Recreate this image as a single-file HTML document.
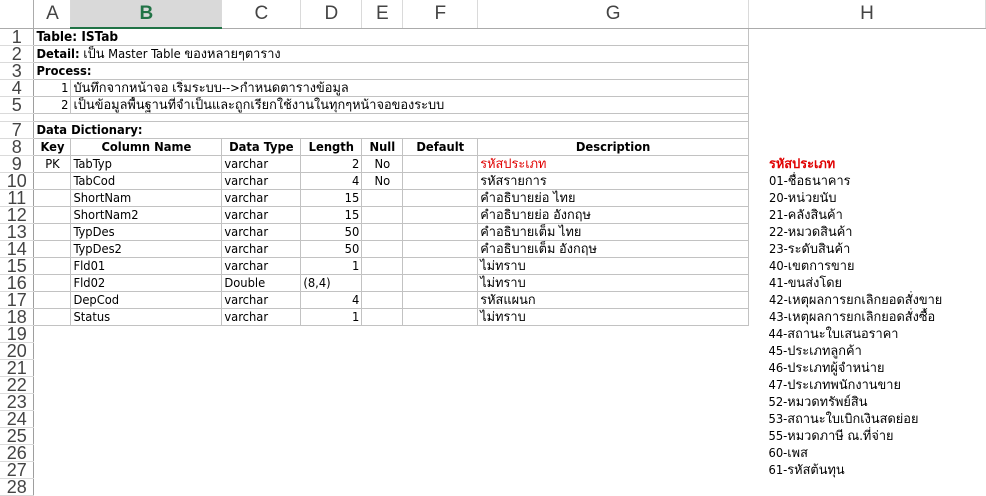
<!DOCTYPE html>
<html><head><meta charset="utf-8"><style>
*{margin:0;padding:0;box-sizing:border-box}
body{width:986px;height:484px;overflow:hidden;background:#fff;font-family:"DejaVu Sans Condensed","Liberation Sans","Noto Sans CJK SC",sans-serif;font-size:12.8px;color:#000}
table{border-collapse:collapse;table-layout:fixed;position:absolute;left:0;top:0}
td{height:17px;padding:0 2px;white-space:nowrap;overflow:hidden;line-height:15px;vertical-align:bottom}
.rh{background:#fff;border-right:1px solid #9e9e9e;border-bottom:1px solid #dadada;color:#444;text-align:center;font-family:"Liberation Sans",sans-serif;font-size:18px;line-height:16px;padding:0}
.ch{height:28px;border-bottom:1px solid #ababab;border-right:1px solid #dadada;color:#444;text-align:center;font-family:"Liberation Sans",sans-serif;font-size:19px;vertical-align:middle;background:#fff}
.chs{background:#d9d9d9;color:#217346;border-bottom:2px solid #217346;font-weight:bold}
.g{border:1px solid #c2c2c2}
.b{font-weight:bold}
.c{text-align:center}.r{text-align:right}
.red{color:#e00000}
.h{padding-left:20px}
</style></head><body>
<table>
<colgroup><col style="width:34px"><col style="width:37px"><col style="width:151px"><col style="width:79px"><col style="width:61px"><col style="width:41px"><col style="width:75px"><col style="width:271px"><col style="width:237px"></colgroup>
<tr><td class="ch" style="background:#fff;border-right:1px solid #ababab"></td><td class="ch">A</td><td class="ch chs">B</td><td class="ch">C</td><td class="ch">D</td><td class="ch">E</td><td class="ch">F</td><td class="ch">G</td><td class="ch" style="border-left:1px solid #dadada">H</td></tr>
<tr><td class="rh">1</td><td class="g b" colspan="7" style="font-size:13.5px">Table: ISTab</td><td></td></tr>
<tr><td class="rh">2</td><td class="g" colspan="7"><b>Detail:</b> เป็น Master Table ของหลายๆตาราง</td><td></td></tr>
<tr><td class="rh">3</td><td class="g b" colspan="7">Process:</td><td></td></tr>
<tr><td class="rh">4</td><td class="g r">1</td><td class="g" colspan="6">บันทึกจากหน้าจอ เริ่มระบบ-->กำหนดตารางข้อมูล</td><td></td></tr>
<tr><td class="rh">5</td><td class="g r">2</td><td class="g" colspan="6">เป็นข้อมูลพื้นฐานที่จำเป็นและถูกเรียกใช้งานในทุกๆหน้าจอของระบบ</td><td></td></tr>
<tr><td class="rh" style="height:8px;font-size:8px;line-height:6px"></td><td class="g" colspan="7" style="height:8px"></td><td style="height:8px"></td></tr>
<tr><td class="rh">7</td><td class="g b" colspan="7">Data Dictionary:</td><td></td></tr>
<tr><td class="rh">8</td><td class="g b c">Key</td><td class="g b c">Column Name</td><td class="g b c">Data Type</td><td class="g b c">Length</td><td class="g b c">Null</td><td class="g b c">Default</td><td class="g b c">Description</td><td></td></tr>
<tr><td class="rh">9</td><td class="g c">PK</td><td class="g">TabTyp</td><td class="g">varchar</td><td class="g r">2</td><td class="g c">No</td><td class="g"></td><td class="g red">รหัสประเภท</td><td class="h red b">รหัสประเภท</td></tr>
<tr><td class="rh">10</td><td class="g"></td><td class="g">TabCod</td><td class="g">varchar</td><td class="g r">4</td><td class="g c">No</td><td class="g"></td><td class="g">รหัสรายการ</td><td class="h">01-ชื่อธนาคาร</td></tr>
<tr><td class="rh">11</td><td class="g"></td><td class="g">ShortNam</td><td class="g">varchar</td><td class="g r">15</td><td class="g"></td><td class="g"></td><td class="g">คำอธิบายย่อ ไทย</td><td class="h">20-หน่วยนับ</td></tr>
<tr><td class="rh">12</td><td class="g"></td><td class="g">ShortNam2</td><td class="g">varchar</td><td class="g r">15</td><td class="g"></td><td class="g"></td><td class="g">คำอธิบายย่อ อังกฤษ</td><td class="h">21-คลังสินค้า</td></tr>
<tr><td class="rh">13</td><td class="g"></td><td class="g">TypDes</td><td class="g">varchar</td><td class="g r">50</td><td class="g"></td><td class="g"></td><td class="g">คำอธิบายเต็ม ไทย</td><td class="h">22-หมวดสินค้า</td></tr>
<tr><td class="rh">14</td><td class="g"></td><td class="g">TypDes2</td><td class="g">varchar</td><td class="g r">50</td><td class="g"></td><td class="g"></td><td class="g">คำอธิบายเต็ม อังกฤษ</td><td class="h">23-ระดับสินค้า</td></tr>
<tr><td class="rh">15</td><td class="g"></td><td class="g">Fld01</td><td class="g">varchar</td><td class="g r">1</td><td class="g"></td><td class="g"></td><td class="g">ไม่ทราบ</td><td class="h">40-เขตการขาย</td></tr>
<tr><td class="rh">16</td><td class="g"></td><td class="g">Fld02</td><td class="g">Double</td><td class="g">(8,4)</td><td class="g"></td><td class="g"></td><td class="g">ไม่ทราบ</td><td class="h">41-ขนส่งโดย</td></tr>
<tr><td class="rh">17</td><td class="g"></td><td class="g">DepCod</td><td class="g">varchar</td><td class="g r">4</td><td class="g"></td><td class="g"></td><td class="g">รหัสแผนก</td><td class="h">42-เหตุผลการยกเลิกยอดสั่งขาย</td></tr>
<tr><td class="rh">18</td><td class="g"></td><td class="g">Status</td><td class="g">varchar</td><td class="g r">1</td><td class="g"></td><td class="g"></td><td class="g">ไม่ทราบ</td><td class="h">43-เหตุผลการยกเลิกยอดสั่งซื้อ</td></tr>
<tr><td class="rh">19</td><td colspan="7"></td><td class="h">44-สถานะใบเสนอราคา</td></tr>
<tr><td class="rh">20</td><td colspan="7"></td><td class="h">45-ประเภทลูกค้า</td></tr>
<tr><td class="rh">21</td><td colspan="7"></td><td class="h">46-ประเภทผู้จำหน่าย</td></tr>
<tr><td class="rh">22</td><td colspan="7"></td><td class="h">47-ประเภทพนักงานขาย</td></tr>
<tr><td class="rh">23</td><td colspan="7"></td><td class="h">52-หมวดทรัพย์สิน</td></tr>
<tr><td class="rh">24</td><td colspan="7"></td><td class="h">53-สถานะใบเบิกเงินสดย่อย</td></tr>
<tr><td class="rh">25</td><td colspan="7"></td><td class="h">55-หมวดภาษี ณ.ที่จ่าย</td></tr>
<tr><td class="rh">26</td><td colspan="7"></td><td class="h">60-เพส</td></tr>
<tr><td class="rh">27</td><td colspan="7"></td><td class="h">61-รหัสต้นทุน</td></tr>
<tr><td class="rh">28</td><td colspan="7"></td><td></td></tr>
</table>
</body></html>
